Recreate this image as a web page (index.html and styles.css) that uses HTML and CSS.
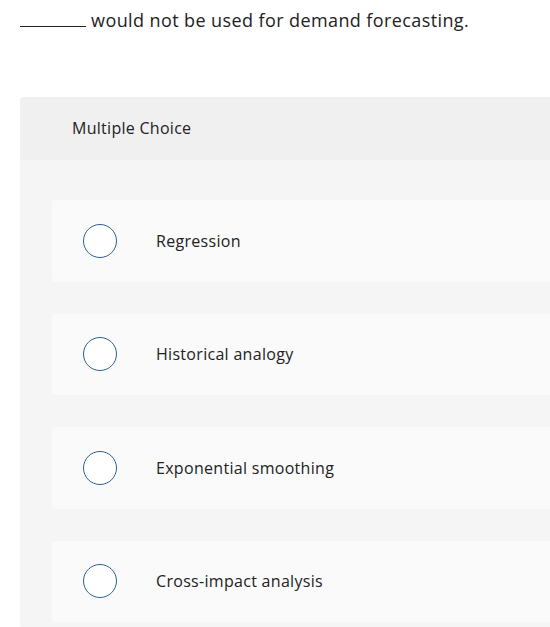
FILE: index.html
```html
<!DOCTYPE html>
<html>
<head>
<meta charset="utf-8">
<link rel="stylesheet" href="styles.css">
</head>
<body>
<p class="question"><span class="blank"></span> would not be used for demand forecasting.</p>
<div class="panel">
  <div class="panel-head">Multiple Choice</div>
  <div class="panel-body">
    <div class="option"><span class="radio"></span><span class="label">Regression</span></div>
    <div class="option"><span class="radio"></span><span class="label">Historical analogy</span></div>
    <div class="option"><span class="radio"></span><span class="label">Exponential smoothing</span></div>
    <div class="option"><span class="radio"></span><span class="label">Cross-impact analysis</span></div>
  </div>
</div>
</body>
</html>
```
FILE: styles.css
```css
html, body { overflow: hidden; }
body {
  margin: 0;
  background: #fff;
  font-family: "Open Sans", "Liberation Sans", sans-serif;
  color: #2d2d2d;
}
.question {
  margin: 0;
  padding: 7px 0 0 20px;
  font-size: 18px;
  line-height: 26px;
  letter-spacing: 0.4px;
  color: #222;
}
.blank {
  display: inline-block;
  width: 66px;
  border-bottom: 1px solid #222;
  vertical-align: baseline;
}
.panel {
  margin: 64px 0 0 20px;
  width: 620px;
  border-radius: 3px;
  overflow: hidden;
}
.panel-head {
  background: #f0f0f0;
  height: 63px;
  padding: 0 0 2px 52px;
  box-sizing: border-box;
  display: flex;
  align-items: center;
  font-size: 16px;
  letter-spacing: 0.28px;
  color: #222;
}
.panel-body {
  background: #f5f5f5;
  padding: 40px 0 6px 32px;
  display: flex;
  flex-direction: column;
  gap: 32px;
}
.option {
  background: #fafafa;
  border-radius: 4px;
  height: 81.5px;
  display: flex;
  align-items: center;
  padding-left: 31px;
}
.radio {
  width: 32px;
  height: 32px;
  border: 1.5px solid #2c5f94;
  border-radius: 50%;
  background: #fff;
  flex: none;
}
.label {
  margin-left: 39px;
  font-size: 16px;
  letter-spacing: 0.3px;
  color: #222;
}
```
